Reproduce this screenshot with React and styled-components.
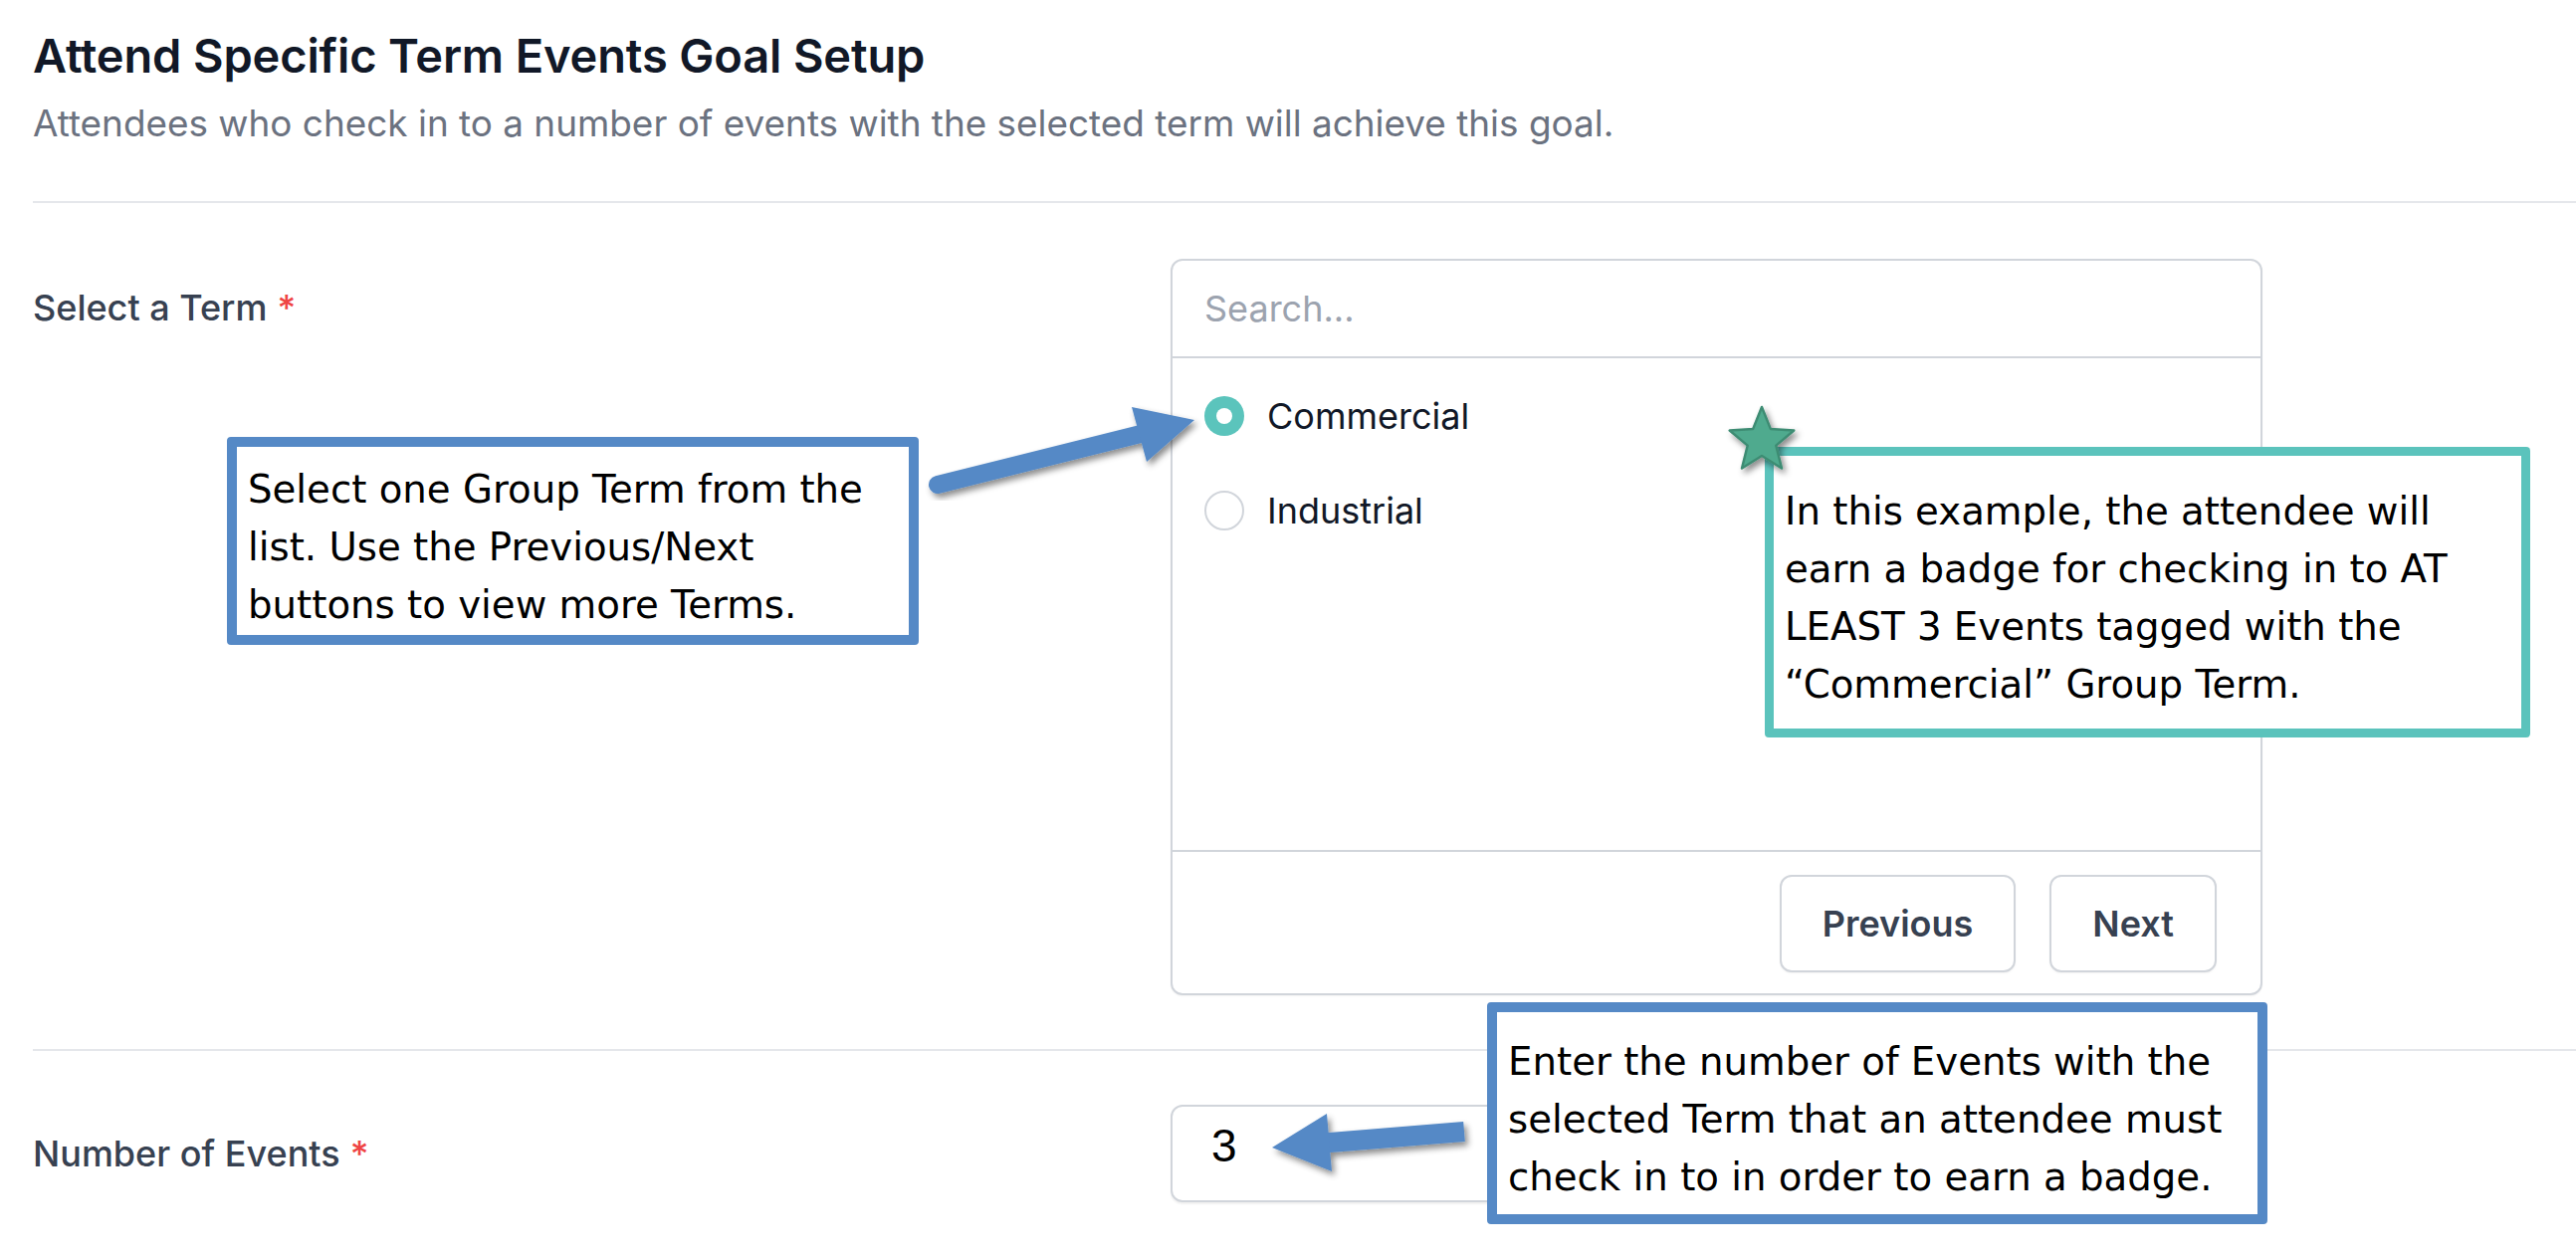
import React from 'react';
import styled, { createGlobalStyle } from 'styled-components';

const GlobalStyle = createGlobalStyle`
  html, body { margin: 0; padding: 0; background: #ffffff; }
  body { font-family: Inter, "Noto Sans", sans-serif; -webkit-font-smoothing: antialiased; }
  * { box-sizing: border-box; }
`;

const Page = styled.div`
  position: relative;
  width: 2588px;
  height: 1262px;
  overflow: hidden;
  background: #ffffff;
  padding: 26px 0 0 33px;
  font-family: Inter, "Noto Sans", sans-serif;
`;

const Header = styled.header`
  display: flex;
  flex-direction: column;
  gap: 14px;
`;

const Title = styled.h1`
  margin: 0;
  font-size: 47px;
  line-height: 60px;
  font-weight: 600;
  letter-spacing: -0.15px;
  color: #111827;
`;

const Subtitle = styled.p`
  margin: 0;
  font-size: 36.9px;
  line-height: 48px;
  font-weight: 400;
  color: #6b7280;
`;

const Divider = styled.div`
  margin-top: ${(p) => p.$top || 0}px;
  height: 2px;
  background: #e5e7eb;
`;

const FormRow = styled.section`
  display: grid;
  grid-template-columns: 1143px 1097px;
  align-items: ${(p) => p.$align || 'start'};
  padding: ${(p) => p.$pt}px 0 ${(p) => p.$pb}px;
`;

const Label = styled.label`
  padding-top: ${(p) => p.$pt || 0}px;
  font-size: 36px;
  line-height: 48px;
  font-weight: 500;
  color: #374151;
`;

const Required = styled.span`
  color: #ef4444;
  margin-left: 10px;
`;

const TermBox = styled.div`
  display: flex;
  flex-direction: column;
  height: 740px;
  border: 2px solid #d1d5db;
  border-radius: 12px;
  overflow: hidden;
  background: #ffffff;
  box-shadow: 0 1px 2px rgba(0, 0, 0, 0.05);
`;

const SearchInput = styled.input`
  flex: none;
  height: 98px;
  border: 0;
  border-bottom: 2px solid #d1d5db;
  padding: 0 32px;
  font-family: Inter, "Noto Sans", sans-serif;
  font-size: 36px;
  color: #111827;
  outline: none;
  background: transparent;
  &::placeholder { color: #9ca3af; }
`;

const RadioList = styled.div`
  flex: 1;
  display: flex;
  flex-direction: column;
  gap: 47px;
  padding: 34px 32px 0;
`;

const RadioRow = styled.div`
  display: flex;
  align-items: center;
  gap: 23px;
  height: 48px;
  font-size: 36px;
  line-height: 48px;
  color: #111827;
`;

const RadioDot = styled.span`
  position: relative;
  flex: none;
  width: 40px;
  height: 40px;
  border-radius: 50%;
  background: ${(p) => (p.$checked ? '#5bc4bc' : '#ffffff')};
  border: ${(p) => (p.$checked ? 'none' : '2px solid #d1d5db')};
  &::after {
    content: '';
    display: ${(p) => (p.$checked ? 'block' : 'none')};
    position: absolute;
    left: 12px;
    top: 12px;
    width: 16px;
    height: 16px;
    border-radius: 50%;
    background: #ffffff;
  }
`;

const Footer = styled.div`
  flex: none;
  display: flex;
  justify-content: flex-end;
  gap: 34px;
  padding: 23px 44px 21px;
  border-top: 2px solid #d1d5db;
`;

const PagerButton = styled.button`
  height: 98px;
  padding: 0 41px;
  border: 2px solid #d1d5db;
  border-radius: 12px;
  background: #ffffff;
  font-family: Inter, "Noto Sans", sans-serif;
  font-size: 36px;
  font-weight: 600;
  color: #374151;
  box-shadow: 0 1px 2px rgba(0, 0, 0, 0.05);
`;

const NumberInput = styled.input`
  width: 560px;
  height: 98px;
  border: 2px solid #d1d5db;
  border-radius: 12px;
  padding: 0 36px 16px 39px;
  font-family: "Liberation Sans", Arial, sans-serif;
  font-size: 46px;
  color: #000000;
  outline: none;
  box-shadow: 0 2px 2px rgba(0, 0, 0, 0.06);
`;

const Callout = styled.div`
  position: absolute;
  left: ${(p) => p.$x}px;
  top: ${(p) => p.$y}px;
  width: ${(p) => p.$w}px;
  height: ${(p) => p.$h}px;
  border: ${(p) => p.$bw}px solid ${(p) => p.$color};
  border-radius: 4px;
  background: #ffffff;
  padding: ${(p) => p.$pt}px 0 0 11px;
  font-family: "DejaVu Sans", Verdana, sans-serif;
  font-size: 38.7px;
  line-height: ${(p) => p.$lh || 58}px;
  color: #000000;
  white-space: nowrap;
`;

const Overlay = styled.svg`
  position: absolute;
  left: 0;
  top: 0;
  width: 2588px;
  height: 1262px;
  pointer-events: none;
`;

const starPoints = (cx, cy, R, r) => {
  const pts = [];
  for (let i = 0; i < 10; i++) {
    const a = (i * 36 * Math.PI) / 180;
    const rad = i % 2 === 0 ? R : r;
    pts.push(`${(cx + rad * Math.sin(a)).toFixed(1)},${(cy - rad * Math.cos(a)).toFixed(1)}`);
  }
  return pts.join(' ');
};

const BLUE = '#5589c6';
const TEAL = '#5bc3bc';

export default function App() {
  return (
    <>
      <GlobalStyle />
      <Page>
        <Header>
          <Title>Attend Specific Term Events Goal Setup</Title>
          <Subtitle>Attendees who check in to a number of events with the selected term will achieve this goal.</Subtitle>
        </Header>
        <Divider $top={54} />

        <FormRow $pt={56} $pb={54}>
          <Label $pt={25}>
            Select a Term<Required>*</Required>
          </Label>
          <TermBox>
            <SearchInput placeholder="Search..." />
            <RadioList>
              <RadioRow>
                <RadioDot $checked />
                Commercial
              </RadioRow>
              <RadioRow>
                <RadioDot />
                Industrial
              </RadioRow>
            </RadioList>
            <Footer>
              <PagerButton>Previous</PagerButton>
              <PagerButton>Next</PagerButton>
            </Footer>
          </TermBox>
        </FormRow>

        <Divider />

        <FormRow $pt={54} $pb={0} $align="center">
          <Label>
            Number of Events<Required>*</Required>
          </Label>
          <NumberInput defaultValue="3" />
        </FormRow>

        <Callout $x={228} $y={439} $w={695} $h={209} $bw={10} $color={BLUE} $pt={14}>
          Select one Group Term from the
          <br />
          list. Use the Previous/Next
          <br />
          buttons to view more Terms.
        </Callout>

        <Callout $x={1773} $y={449} $w={769} $h={292} $bw={9} $color={TEAL} $pt={27}>
          In this example, the attendee will
          <br />
          earn a badge for checking in to AT
          <br />
          LEAST 3 Events tagged with the
          <br />
          “Commercial” Group Term.
        </Callout>

        <Callout $x={1494} $y={1007} $w={784} $h={223} $bw={10} $color={BLUE} $pt={21} $lh={58}>
          Enter the number of Events with the
          <br />
          selected Term that an attendee must
          <br />
          check in to in order to earn a badge.
        </Callout>

        <Overlay viewBox="0 0 2588 1262">
          <defs>
            <filter id="shadow" x="-20%" y="-20%" width="140%" height="140%">
              <feDropShadow dx="3" dy="4" stdDeviation="3" floodColor="#000000" floodOpacity="0.45" />
            </filter>
          </defs>
          <g filter="url(#shadow)" fill={BLUE}>
            <line x1="942" y1="487" x2="1150" y2="435" stroke={BLUE} strokeWidth="18" strokeLinecap="round" />
            <polygon points="1200,422 1137,409 1152,464" />
          </g>
          <g filter="url(#shadow)" fill={BLUE}>
            <line x1="1471" y1="1137" x2="1330" y2="1148.5" stroke={BLUE} strokeWidth="20" strokeLinecap="butt" />
            <polygon points="1278,1153 1333,1119 1338,1177" />
          </g>
          <polygon
            points={starPoints(1770, 443, 34, 15)}
            fill="#4faa8e"
            stroke="#3e8c73"
            strokeWidth="2.5"
            strokeLinejoin="round"
            filter="url(#shadow)"
          />
        </Overlay>
      </Page>
    </>
  );
}
